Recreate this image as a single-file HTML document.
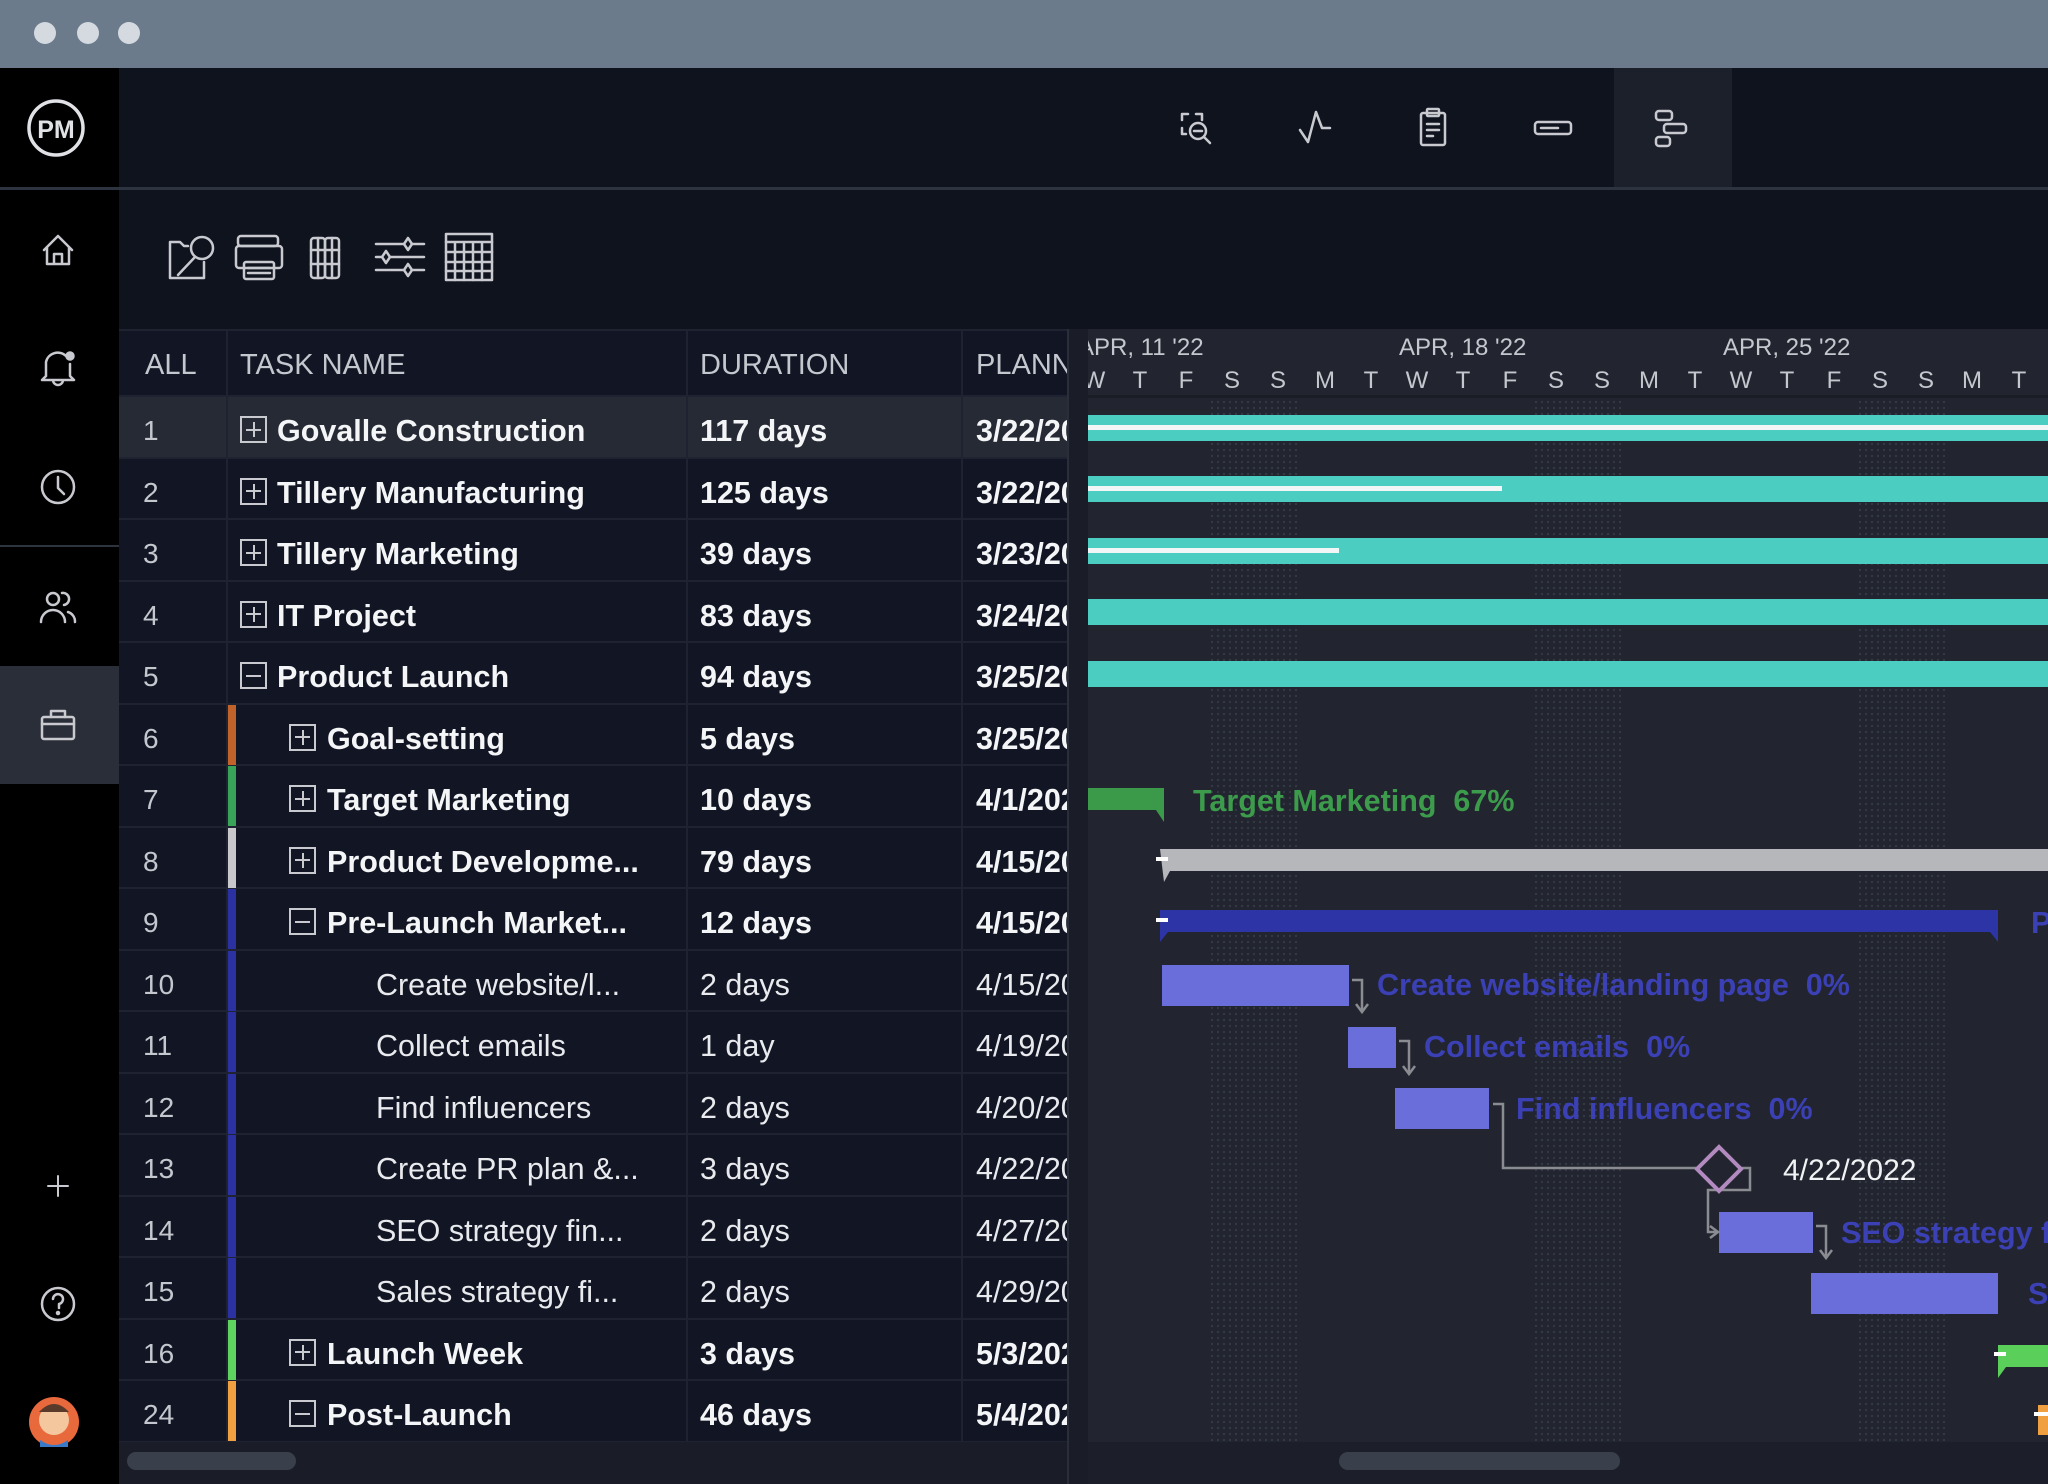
<!DOCTYPE html>
<html><head><meta charset="utf-8"><style>
*{margin:0;padding:0;box-sizing:border-box}
body{width:2048px;height:1484px;overflow:hidden;background:#11151f;font-family:"Liberation Sans",sans-serif;position:relative;color:#e8eaee}
.a{position:absolute}
.row{position:absolute;left:119px;width:948px;height:61.5px;border-bottom:2px solid #1f2331;background:#121624}
.num{position:absolute;left:24px;top:4px;line-height:60px;font-size:28px;color:#c4c7ce}
.tn{position:absolute;top:4px;line-height:60px;font-size:30.5px;white-space:nowrap}
.b{font-weight:bold;color:#f4f5f7}
.dur{position:absolute;left:581px;top:4px;line-height:60px;font-size:30.5px}
.pl{position:absolute;left:857px;top:4px;line-height:60px;font-size:30.5px;width:91px;overflow:hidden;white-space:nowrap}
.box{position:absolute;width:27px;height:27px;border:2px solid #c8cad0;top:19px}
.box:before{content:"";position:absolute;left:4px;right:4px;top:10.5px;height:2px;background:#c8cad0}
.plus:after{content:"";position:absolute;top:4px;bottom:4px;left:10.5px;width:2px;background:#c8cad0}
.cb{position:absolute;left:109px;top:0;width:8px;height:60px}
.day{position:absolute;font-size:24px;color:#c4c7ce;width:30px;text-align:center}
.lbl{position:absolute;font-size:30.5px;font-weight:bold;color:#3b40b4;white-space:nowrap;line-height:30px}
.wk{position:absolute;top:70px;width:92px;height:1043px;background-image:radial-gradient(circle,#353946 1px,transparent 1.3px);background-size:6px 6px}
</style></head><body>
<div class="a" style="left:0;top:0;width:2048px;height:68px;background:#6b7b8c"></div>
<div class="a" style="left:34px;top:22px;width:22px;height:22px;border-radius:50%;background:#d4dae0"></div>
<div class="a" style="left:77px;top:22px;width:22px;height:22px;border-radius:50%;background:#d4dae0"></div>
<div class="a" style="left:118px;top:22px;width:22px;height:22px;border-radius:50%;background:#d4dae0"></div>
<div class="a" style="left:0;top:68px;width:119px;height:1416px;background:#000"></div>
<div class="a" style="left:0;top:666px;width:119px;height:118px;background:#2a2e38"></div>
<div class="a" style="left:0;top:187px;width:2048px;height:3px;background:#2e3340"></div>
<div class="a" style="left:0;top:545px;width:119px;height:2px;background:#2e3340"></div>
<div class="a" style="left:119px;top:68px;width:1929px;height:119px;background:#0f131e"></div>
<div class="a" style="left:1614px;top:68px;width:118px;height:119px;background:#1c202b"></div>
<div class="a" style="left:119px;top:190px;width:1929px;height:139px;background:#0f131e"></div>
<svg class="a" style="left:0;top:0" width="2048" height="1484" viewBox="0 0 2048 1484" fill="none" stroke="#c8cad0" stroke-width="2.5" stroke-linecap="round" stroke-linejoin="round">
<circle cx="56" cy="128" r="27" stroke="#e0e2e6" stroke-width="3.5"/>
<text x="56" y="138" font-family="Liberation Sans" font-size="25" fill="#e0e2e6" stroke="none" text-anchor="middle" font-weight="bold">PM</text>
<path d="M44 250 L58 236 L72 250 M47 247 V264 H69 V247 M54 264 V254 H62 V264"/>
<path d="M46 376 V362 A12 12 0 0 1 66 356 M70 364 V376 L74 380 H42 L46 376 M53 380 A5 5 0 0 0 63 380"/><circle cx="70" cy="356" r="3.5" fill="#c8cad0"/>
<circle cx="58" cy="487" r="16"/><path d="M58 477 V488 L64 494"/>
<circle cx="53" cy="599" r="6"/><path d="M41 622 A12 12 0 0 1 65 622 M62 593 A6 6 0 0 1 64 605 M68 612 A10 10 0 0 1 75 622"/>
<rect x="42" y="717" width="32" height="22" rx="2"/><path d="M51 717 V711 H65 V717 M42 724 H74"/>
<path d="M58 1176 V1196 M48 1186 H68" stroke-width="2"/>
<circle cx="58" cy="1304" r="16"/><path d="M53 1299 A5 5 0 1 1 59 1304 V1308"/><circle cx="58" cy="1313" r="1" fill="#c8cad0"/>
<circle cx="54" cy="1422" r="25" fill="#e8693c" stroke="none"/><circle cx="54" cy="1420" r="15" fill="#f4c79e" stroke="none"/><path d="M39 1412 Q54 1396 69 1412 Z" fill="#5a3a2a" stroke="none"/><path d="M40 1440 Q54 1450 68 1440 L68 1447 H40 Z" fill="#3a78c8" stroke="none"/>
<g stroke="#c8cad0" stroke-width="2.5">
<path d="M1182 120 V114 H1188 M1196 114 H1202 V120 M1182 128 V134 H1186"/><circle cx="1198" cy="131" r="8"/><path d="M1194 131 H1202 M1204 137 L1210 143"/>
<path d="M1300 130 L1308 142 L1316 112 L1322 128 H1330"/>
<rect x="1421" y="113" width="24" height="32" rx="2"/><rect x="1427" y="109" width="12" height="7" rx="1"/><path d="M1427 124 H1439 M1427 130 H1439 M1427 136 H1433"/>
<rect x="1535" y="122" width="36" height="12" rx="3"/><path d="M1541 128 H1558"/>
<rect x="1656" y="111" width="16" height="9" rx="3"/><rect x="1664" y="124" width="22" height="9" rx="3"/><rect x="1656" y="137" width="14" height="9" rx="3"/>
</g>
<g stroke="#c8cad0" stroke-width="2.5">
<path d="M170 242 V278 H204 V262 M170 242 H180 L184 246 H188"/><circle cx="202" cy="248" r="11"/><path d="M195 257 L178 275"/>
<rect x="238" y="236" width="40" height="10" rx="3"/><rect x="236" y="246" width="46" height="22" rx="3"/><rect x="244" y="262" width="30" height="17" rx="2"/><path d="M248 268 H270 M248 273 H270"/>
<rect x="311" y="238" width="14" height="40" rx="3"/><rect x="325" y="238" width="14" height="40" rx="3"/><path d="M311 250 H339 M311 264 H339 M318 238 V278 M332 238 V278"/>
<path d="M376 244 H424 M376 257 H424 M376 270 H424"/><path d="M408 238 L412 244 L408 250 L404 244 Z M386 251 L390 257 L386 263 L382 257 Z M408 264 L412 270 L408 276 L404 270 Z" fill="#0f131e"/>
<rect x="446" y="234" width="46" height="46"/><path d="M446 242 H492 M446 252 H492 M446 262 H492 M446 271 H492 M455 242 V280 M464 242 V280 M473 242 V280 M482 242 V280"/>
</g>
</svg>
<div class="a" style="left:119px;top:329px;width:948px;height:68px;background:#121624;border-top:2px solid #1f2331;border-bottom:2px solid #1f2331"></div>
<div class="a" style="left:226px;top:329px;width:2px;height:68px;background:#1f2331"></div>
<div class="a" style="left:686px;top:329px;width:2px;height:68px;background:#1f2331"></div>
<div class="a" style="left:961px;top:329px;width:2px;height:68px;background:#1f2331"></div>
<div class="a" style="left:145px;top:349px;font-size:29px;color:#c4c7ce">ALL</div>
<div class="a" style="left:240px;top:349px;font-size:29px;color:#c4c7ce">TASK NAME</div>
<div class="a" style="left:700px;top:349px;font-size:29px;color:#c4c7ce">DURATION</div>
<div class="a" style="left:976px;top:349px;font-size:29px;color:#c4c7ce;width:91px;overflow:hidden;white-space:nowrap">PLANNED</div>

<div class="row" style="top:397px;background:#262a35"><span class="num">1</span><div class="box plus" style="left:121px"></div><span class="tn b" style="left:158px">Govalle Construction</span><span class="dur b">117 days</span><span class="pl b">3/22/2022</span></div>
<div class="row" style="top:458.5px"><span class="num">2</span><div class="box plus" style="left:121px"></div><span class="tn b" style="left:158px">Tillery Manufacturing</span><span class="dur b">125 days</span><span class="pl b">3/22/2022</span></div>
<div class="row" style="top:520px"><span class="num">3</span><div class="box plus" style="left:121px"></div><span class="tn b" style="left:158px">Tillery Marketing</span><span class="dur b">39 days</span><span class="pl b">3/23/2022</span></div>
<div class="row" style="top:581.5px"><span class="num">4</span><div class="box plus" style="left:121px"></div><span class="tn b" style="left:158px">IT Project</span><span class="dur b">83 days</span><span class="pl b">3/24/2022</span></div>
<div class="row" style="top:643px"><span class="num">5</span><div class="box" style="left:121px"></div><span class="tn b" style="left:158px">Product Launch</span><span class="dur b">94 days</span><span class="pl b">3/25/2022</span></div>
<div class="row" style="top:704.5px"><span class="num">6</span><div class="cb" style="background:#c0622a"></div><div class="box plus" style="left:170px"></div><span class="tn b" style="left:208px">Goal-setting</span><span class="dur b">5 days</span><span class="pl b">3/25/2022</span></div>
<div class="row" style="top:766px"><span class="num">7</span><div class="cb" style="background:#3aa35a"></div><div class="box plus" style="left:170px"></div><span class="tn b" style="left:208px">Target Marketing</span><span class="dur b">10 days</span><span class="pl b">4/1/2022</span></div>
<div class="row" style="top:827.5px"><span class="num">8</span><div class="cb" style="background:#c8c8cc"></div><div class="box plus" style="left:170px"></div><span class="tn b" style="left:208px">Product Developme...</span><span class="dur b">79 days</span><span class="pl b">4/15/2022</span></div>
<div class="row" style="top:889px"><span class="num">9</span><div class="cb" style="background:#2b31a0"></div><div class="box" style="left:170px"></div><span class="tn b" style="left:208px">Pre-Launch Market...</span><span class="dur b">12 days</span><span class="pl b">4/15/2022</span></div>
<div class="row" style="top:950.5px"><span class="num">10</span><div class="cb" style="background:#2b31a0"></div><span class="tn" style="left:257px">Create website/l...</span><span class="dur">2 days</span><span class="pl">4/15/2022</span></div>
<div class="row" style="top:1012px"><span class="num">11</span><div class="cb" style="background:#2b31a0"></div><span class="tn" style="left:257px">Collect emails</span><span class="dur">1 day</span><span class="pl">4/19/2022</span></div>
<div class="row" style="top:1073.5px"><span class="num">12</span><div class="cb" style="background:#2b31a0"></div><span class="tn" style="left:257px">Find influencers</span><span class="dur">2 days</span><span class="pl">4/20/2022</span></div>
<div class="row" style="top:1135px"><span class="num">13</span><div class="cb" style="background:#2b31a0"></div><span class="tn" style="left:257px">Create PR plan &amp;...</span><span class="dur">3 days</span><span class="pl">4/22/2022</span></div>
<div class="row" style="top:1196.5px"><span class="num">14</span><div class="cb" style="background:#2b31a0"></div><span class="tn" style="left:257px">SEO strategy fin...</span><span class="dur">2 days</span><span class="pl">4/27/2022</span></div>
<div class="row" style="top:1258px"><span class="num">15</span><div class="cb" style="background:#2b31a0"></div><span class="tn" style="left:257px">Sales strategy fi...</span><span class="dur">2 days</span><span class="pl">4/29/2022</span></div>
<div class="row" style="top:1319.5px"><span class="num">16</span><div class="cb" style="background:#5fd35f"></div><div class="box plus" style="left:170px"></div><span class="tn b" style="left:208px">Launch Week</span><span class="dur b">3 days</span><span class="pl b">5/3/2022</span></div>
<div class="row" style="top:1381px"><span class="num">24</span><div class="cb" style="background:#f0a040"></div><div class="box" style="left:170px"></div><span class="tn b" style="left:208px">Post-Launch</span><span class="dur b">46 days</span><span class="pl b">5/4/2022</span></div>
<div class="a" style="left:226px;top:397px;width:2px;height:1045px;background:#1f2331"></div>
<div class="a" style="left:686px;top:397px;width:2px;height:1045px;background:#1f2331"></div>
<div class="a" style="left:961px;top:397px;width:2px;height:1045px;background:#1f2331"></div>
<div class="a" style="left:119px;top:1442px;width:948px;height:42px;background:#1a1d27"></div>
<div class="a" style="left:127px;top:1452px;width:169px;height:18px;border-radius:9px;background:#3a3f4c"></div>
<div class="a" style="left:1067px;top:329px;width:21px;height:1155px;background:#1a1d27;border-left:2px solid #2a2e3a"></div>
<div class="a" style="left:1088px;top:329px;width:960px;height:1113px;background:#22252f;overflow:hidden">
<div class="wk" style="left:121px"></div>
<div class="wk" style="left:445px"></div>
<div class="wk" style="left:769px"></div>
<div class="a" style="left:0;top:66px;width:960px;height:3px;background:#1a1d26"></div>
<div class="a" style="left:-10px;top:5px;font-size:24px;color:#c4c7ce;white-space:nowrap">APR, 11 '22</div>
<div class="a" style="left:311px;top:5px;font-size:24px;color:#c4c7ce">APR, 18 '22</div>
<div class="a" style="left:635px;top:5px;font-size:24px;color:#c4c7ce">APR, 25 '22</div>
</div>
<div class="a" style="left:1088px;top:329px;width:960px;height:80px;overflow:hidden">
<span class="day" style="left:-9px;top:38px">W</span><span class="day" style="left:37px;top:38px">T</span><span class="day" style="left:83px;top:38px">F</span><span class="day" style="left:129px;top:38px">S</span><span class="day" style="left:175px;top:38px">S</span><span class="day" style="left:222px;top:38px">M</span><span class="day" style="left:268px;top:38px">T</span><span class="day" style="left:314px;top:38px">W</span><span class="day" style="left:360px;top:38px">T</span><span class="day" style="left:407px;top:38px">F</span><span class="day" style="left:453px;top:38px">S</span><span class="day" style="left:499px;top:38px">S</span><span class="day" style="left:546px;top:38px">M</span><span class="day" style="left:592px;top:38px">T</span><span class="day" style="left:638px;top:38px">W</span><span class="day" style="left:684px;top:38px">T</span><span class="day" style="left:731px;top:38px">F</span><span class="day" style="left:777px;top:38px">S</span><span class="day" style="left:823px;top:38px">S</span><span class="day" style="left:869px;top:38px">M</span><span class="day" style="left:916px;top:38px">T</span>
</div>
<div class="a" style="left:1088px;top:1442px;width:960px;height:42px;background:#1c1f29"></div>
<div class="a" style="left:1339px;top:1452px;width:281px;height:18px;border-radius:9px;background:#3a3f4c"></div>
<div class="a" style="left:1088px;top:415px;width:960px;height:26px;background:#4ccdc2"></div>
<div class="a" style="left:1088px;top:425px;width:960px;height:5px;background:#f2f6f6"></div>
<div class="a" style="left:1088px;top:476px;width:960px;height:26px;background:#4ccdc2"></div>
<div class="a" style="left:1088px;top:486px;width:414px;height:5px;background:#f2f6f6"></div>
<div class="a" style="left:1088px;top:538px;width:960px;height:26px;background:#4ccdc2"></div>
<div class="a" style="left:1088px;top:548px;width:251px;height:5px;background:#f2f6f6"></div>
<div class="a" style="left:1088px;top:599px;width:960px;height:26px;background:#4ccdc2"></div>
<div class="a" style="left:1088px;top:661px;width:960px;height:26px;background:#4ccdc2"></div>
<svg class="a" style="left:0;top:0" width="2048" height="1484" viewBox="0 0 2048 1484">
<path d="M1088 788 H1164 V822 L1156 810 H1088 Z" fill="#3a9a4a"/>
<path d="M1160 849 H2048 V871 H1170 L1164 882 Z" fill="#b5b7bb"/><rect x="1156" y="857" width="12" height="4" fill="#fff"/>
<path d="M1160 910 H1998 V942 L1990 932 H1168 L1160 942 Z" fill="#2c34a6"/><rect x="1156" y="918" width="12" height="4" fill="#fff"/>
<rect x="1162" y="965" width="187" height="41" fill="#6a6edb"/>
<rect x="1348" y="1027" width="48" height="41" fill="#6a6edb"/>
<rect x="1395" y="1088" width="94" height="41" fill="#6a6edb"/>
<rect x="1719" y="1212" width="94" height="41" fill="#6a6edb"/>
<rect x="1811" y="1273" width="187" height="41" fill="#6a6edb"/>
<path d="M1998 1345 H2048 V1367 H2006 L1998 1378 Z" fill="#5ad05a"/><rect x="1994" y="1352" width="12" height="4" fill="#fff"/>
<rect x="2038" y="1405" width="10" height="30" fill="#f0a040"/><rect x="2034" y="1412" width="14" height="4" fill="#fff"/>
<g fill="none" stroke="#8a8c92" stroke-width="2.5">
<path d="M1352 980 H1362 V1010"/><path d="M1356 1004 L1362 1012 L1368 1004"/>
<path d="M1399 1041 H1409 V1072"/><path d="M1403 1066 L1409 1074 L1415 1066"/>
<path d="M1493 1104 H1503 V1168 H1698"/>
<path d="M1740 1168 H1750 V1190 H1708 V1232 H1716"/><path d="M1710 1226 L1718 1232 L1710 1238"/>
<path d="M1816 1226 H1826 V1256"/><path d="M1820 1250 L1826 1258 L1832 1250"/>
</g>
<path d="M1719 1147 L1741 1169 L1719 1191 L1697 1169 Z" fill="none" stroke="#b28ac0" stroke-width="4"/>
</svg>
<div class="lbl" style="left:1193px;top:786px;color:#3c9c4c">Target Marketing&nbsp; 67%</div>
<div class="lbl" style="left:2031px;top:908px">P</div>
<div class="lbl" style="left:1377px;top:970px">Create website/landing page&nbsp; 0%</div>
<div class="lbl" style="left:1424px;top:1032px">Collect emails&nbsp; 0%</div>
<div class="lbl" style="left:1516px;top:1094px">Find influencers&nbsp; 0%</div>
<div class="lbl" style="left:1783px;top:1156px;color:#f0f2f4;font-weight:normal;font-size:30px">4/22/2022</div>
<div class="lbl" style="left:1841px;top:1218px">SEO strategy f</div>
<div class="lbl" style="left:2028px;top:1279px">S</div>
</body></html>
